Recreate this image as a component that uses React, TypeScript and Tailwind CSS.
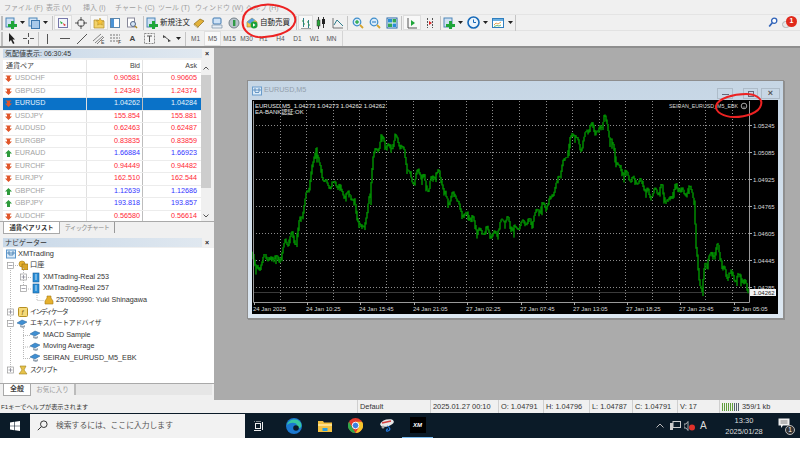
import React from "react";

const FF = "font-['Liberation_Sans','Noto_Sans_CJK_JP',sans-serif]";

/* ---------- chart data ---------- */
const anchors: [number, number][] = [
  [253,252],[256,270],[260,262],[265,258],[270,262],[275,252],[279,261],[283,250],[287,243],[292,232],[296,240],[300,222],[304,208],[307,190],[311,172],[316,148],[319,168],[323,176],[327,182],[332,186],[338,186],[344,192],[350,196],[354,206],[358,218],[362,226],[367,216],[370,196],[373,155],[377,146],[381,136],[385,146],[390,150],[395,134],[402,150],[408,170],[412,178],[418,174],[424,180],[428,186],[433,175],[441,177],[444,192],[450,200],[455,196],[460,208],[466,214],[472,222],[478,228],[486,232],[492,236],[498,226],[504,222],[512,224],[520,228],[530,218],[540,210],[548,200],[556,190],[562,165],[568,148],[574,134],[580,146],[586,132],[592,128],[598,130],[604,118],[609,136],[614,148],[620,170],[626,176],[632,176],[638,182],[644,188],[650,192],[656,194],[662,190],[668,200],[674,192],[680,188],[686,190],[692,192],[694,200],[696,250],[699,275],[702,288],[705,265],[708,262],[712,255],[716,246],[718,244],[721,258],[723,270],[726,278],[729,274],[733,272],[737,276],[741,278],[745,286],[749,292],
];
function yAt(x: number) {
  for (let i = 1; i < anchors.length; i++) {
    const [x0, y0] = anchors[i - 1];
    const [x1, y1] = anchors[i];
    if (x <= x1) return y0 + ((y1 - y0) * (x - x0)) / (x1 - x0);
  }
  return 292;
}
function buildBars() {
  let s = 12345;
  const r = () => {
    s = (s * 1103515245 + 12345) & 0x7fffffff;
    return s / 0x7fffffff;
  };
  let d = "";
  let prev = yAt(253);
  for (let x = 253; x < 749; x += 1) {
    const wave = Math.sin(x * 0.9) * 3.5 + Math.sin(x * 0.37) * 3;
    const m = yAt(x) + wave + (r() - 0.5) * 3;
    const top = Math.min(m, prev) - r();
    const bot = Math.max(m, prev) + r() * r() * r() * 12;
    d += `M${x} ${top.toFixed(1)}V${bot.toFixed(1)}`;
    prev = m;
  }
  return d;
}
const barsPath = buildBars();

const priceLabels = [
  ["1.05245", 125], ["1.05085", 152], ["1.04925", 179], ["1.04765", 206], ["1.04605", 233], ["1.04445", 260], ["1.04285", 287],
] as const;
const timeLabels = [
  ["24 Jan 2025", 253], ["24 Jan 10:25", 306], ["24 Jan 15:45", 359], ["24 Jan 21:05", 413], ["27 Jan 02:25", 466],
  ["27 Jan 07:45", 520], ["27 Jan 13:05", 573], ["27 Jan 18:25", 626], ["27 Jan 23:45", 679], ["28 Jan 05:05", 733],
] as const;

function Chart() {
  const vs: number[] = [];
  for (let i = 0; i < 18; i++) vs.push(279.5 + i * 26.6);
  const st = { fontFamily: "'Liberation Sans', 'Noto Sans CJK JP', sans-serif" };
  return (
    <svg width="526" height="214" viewBox="252 100 526 214" className="block shrink-0" style={st}>
      <rect x="252" y="100" width="526" height="214" fill="#000" />
      {vs.map((x) => (
        <line key={x} x1={Math.round(x) + 0.5} x2={Math.round(x) + 0.5} y1="101" y2="302" stroke="#8c8c8c" strokeWidth="1" strokeDasharray="1 2" />
      ))}
      {priceLabels.map(([, y]) => (
        <line key={y} x1="253" x2="749" y1={y + 0.5} y2={y + 0.5} stroke="#8c8c8c" strokeWidth="1" strokeDasharray="1 2" />
      ))}
      <line x1="253" x2="749" y1="292.5" y2="292.5" stroke="#3a3a3a" />
      <path d={barsPath} stroke="#006800" strokeWidth="1.3" fill="none" />
      <path d={barsPath} stroke="#00a200" strokeWidth="0.8" fill="none" />
      <path d="M253.5 101V302.5H749.5V101" stroke="#9a9a9a" fill="none" />
      <text x="255" y="108" fontSize="6" fill="#e6e6e6">{"EURUSD,M5\u00a0\u00a01.04273 1.04273 1.04262 1.04262"}</text>
      <text x="255" y="114" fontSize="6" fill="#e6e6e6">EA-BANK認証:OK</text>
      <text x="669" y="108" fontSize="6.2" fill="#d8d8d8" textLength="69" lengthAdjust="spacingAndGlyphs">SEIRAN_EURUSD_M5_EBK</text>
      <circle cx="744" cy="106" r="2.8" fill="none" stroke="#cfcfcf" strokeWidth="0.8" />
      <path d="M742.8 106.8q1.2 1 2.4 0" stroke="#cfcfcf" strokeWidth="0.6" fill="none" />
      {priceLabels.map(([t, y]) => (
        <g key={t}>
          <line x1="749" x2="752" y1={y + 0.5} y2={y + 0.5} stroke="#aaa" />
          <text x="753" y={y + 2.5} fontSize="6" fill="#d8d8d8">{t}</text>
        </g>
      ))}
      <rect x="750" y="289" width="26" height="7" fill="#f4f4f4" />
      <text x="753" y="295" fontSize="6" fill="#222">1.04262</text>
      {timeLabels.map(([t, x]) => (
        <g key={t}>
          <line x1={x + 1.5} x2={x + 1.5} y1="302" y2="305" stroke="#aaa" />
          <text x={x} y="310.5" fontSize="6" fill="#d8d8d8">{t}</text>
        </g>
      ))}
    </svg>
  );
}

/* ---------- small icons ---------- */
type P = { children: React.ReactNode; w?: number; h?: number };
const Ic = ({ children, w = 12, h = 12 }: P) => (
  <svg width={w} height={h} viewBox={`0 0 ${w} ${h}`} className="block shrink-0">{children}</svg>
);
const Caret = () => (
  <svg width="5" height="3" viewBox="0 0 5 3" className="block shrink-0"><path d="M0 0h5L2.5 3z" fill="#222" /></svg>
);
const DocPlus = () => (
  <Ic><rect x="1" y="1" width="8" height="9" fill="#cfe0f2" stroke="#4d86b8" /><path d="M6 4h3v3h3v3H9v2H6v-2H3V7h3z" fill="#1fa63a" /></Ic>
);
const DocsBlue = () => (
  <Ic><rect x="1" y="1" width="8" height="8" fill="#d5e6f7" stroke="#4d86b8" /><rect x="3.5" y="3.5" width="8" height="8" fill="#a9c9ea" stroke="#3f78b0" /></Ic>
);
const MWatch = () => (
  <Ic><rect x="1.5" y="1.5" width="9" height="9" fill="#f4f8fc" stroke="#77a" /><path d="M3 4l3 2-2 1z" fill="#2a3" /><path d="M6 6l3 2-2 1z" fill="#d33" /></Ic>
);
const Crosshair = () => (
  <Ic><circle cx="6" cy="6" r="3.5" fill="none" stroke="#555" /><path d="M6 0v4M6 8v4M0 6h4M8 6h4" stroke="#555" /></Ic>
);
const FolderStar = () => (
  <Ic><path d="M1 3h4l1 1h5v7H1z" fill="#f3d36a" stroke="#b08a2a" strokeWidth=".7" /><path d="M7 1l1.2 2.4 2.6.3-1.9 1.8.5 2.6L7 6.9 4.6 8.1l.5-2.6L3.2 3.7l2.6-.3z" fill="#f7c43a" stroke="#a98424" strokeWidth=".5" /></Ic>
);
const Panel = () => (
  <Ic><rect x="1.5" y="1.5" width="9" height="9" fill="#fff" stroke="#5b86ad" /><rect x="2" y="2" width="3" height="8" fill="#4b93d6" /></Ic>
);
const DocMag = () => (
  <Ic><rect x="1.5" y="1" width="7" height="9" fill="#fff" stroke="#889" /><circle cx="7" cy="7" r="2.5" fill="#d5e6f7" stroke="#568" /><path d="M9 9l2 2" stroke="#a82" strokeWidth="1.4" /></Ic>
);
const Book = () => (
  <Ic><path d="M1 7l6-5 4 2-6 6z" fill="#e3b23a" stroke="#8d6a16" strokeWidth=".7" /><path d="M1 7l4 3v1L1 8z" fill="#fff3c8" stroke="#8d6a16" strokeWidth=".4" /></Ic>
);
const Monitor = () => (
  <Ic><rect x="2" y="1" width="8" height="6" rx="1" fill="#cfe3f7" stroke="#3f78b0" /><path d="M1 8h10v3H1z" fill="#e7eef6" stroke="#7a8fa5" strokeWidth=".7" /></Ic>
);
const Globe = () => (
  <Ic><circle cx="6" cy="6" r="5" fill="#b9c4cc" stroke="#77838c" /><rect x="5" y="3" width="2.4" height="6" fill="#2e9a45" /></Ic>
);
const AutoTrade = () => (
  <Ic><path d="M1 5l5-4 5 4v5H1z" fill="#f1c84e" stroke="#a2801f" strokeWidth=".6" /><path d="M1 5l5-4 3 2-5 4z" fill="#5aa0e0" /><circle cx="8" cy="8" r="3.4" fill="#19a13b" /><path d="M7 6.3l2.5 1.7L7 9.7z" fill="#fff" /></Ic>
);
const Bars = () => (
  <Ic><path d="M3.5 1v9M8.5 3v8" stroke="#2f7d8c" /><path d="M2 4h1.5M3.5 7H5M7 5h1.5M8.5 8H10" stroke="#2a9d3a" /><path d="M1 11.5h10" stroke="#666" strokeWidth=".6" /></Ic>
);
const Candles = () => (
  <Ic><path d="M3.5 0v12M8.5 0v11" stroke="#333" /><rect x="2" y="3" width="3" height="6" fill="#2aa53c" stroke="#333" strokeWidth=".5" /><rect x="7" y="2" width="3" height="5" fill="#222" /></Ic>
);
const LineC = () => (
  <Ic><path d="M1 1v10h10" stroke="#555" fill="none" strokeWidth=".8" /><path d="M2 8l3-5 3 3 3 3" stroke="#2f7d8c" fill="none" /></Ic>
);
const Zoom = ({ minus }: { minus?: boolean }) => (
  <Ic><circle cx="5" cy="5" r="3.8" fill="#dcecf9" stroke="#3e8dcb" strokeWidth="1.2" /><path d="M3 5h4" stroke={minus ? "#3e8dcb" : "#1fa63a"} strokeWidth="1.2" />{!minus && <path d="M5 3v4" stroke="#1fa63a" strokeWidth="1.2" />}<path d="M8 8l3 3" stroke="#d8a52f" strokeWidth="1.8" /></Ic>
);
const Tile = () => (
  <Ic><rect x="1" y="1" width="10" height="10" fill="#fff" stroke="#2467a8" /><rect x="2" y="2" width="4" height="3.5" fill="#2a8ed6" /><rect x="6.5" y="2" width="3.5" height="3.5" fill="#35a853" /><rect x="2" y="6.5" width="4" height="3.5" fill="#35a853" /><rect x="6.5" y="6.5" width="3.5" height="3.5" fill="#2a8ed6" /></Ic>
);
const AutoScroll = () => (
  <Ic><path d="M2 1v10h9" stroke="#555" fill="none" /><path d="M5 3l4 3-4 3z" fill="#1fa63a" /></Ic>
);
const Shift = () => (
  <Ic><path d="M3.5 1v10M8.5 1v10" stroke="#555" strokeDasharray="2 1" /><path d="M5 4l3 2-3 2z" fill="#d22" /></Ic>
);
const Clock = () => (
  <Ic w={13} h={13}><circle cx="6.5" cy="6.5" r="5.5" fill="#eaf3fb" stroke="#1669b8" strokeWidth="1.6" /><path d="M6.5 3.5v3h2.5" stroke="#1669b8" fill="none" /></Ic>
);
const Tpl = () => (
  <Ic w={13} h={12}><rect x=".5" y="1.5" width="11" height="9" fill="#fff" stroke="#2f7fbf" /><rect x="1" y="2" width="10" height="2" fill="#6aaee0" /><path d="M2 8l2-2 2 1 3-2" stroke="#e08a2a" fill="none" strokeWidth=".8" /><path d="M2 9.5l3-1 2 .5 2-1" stroke="#2a9d3a" fill="none" strokeWidth=".7" /></Ic>
);
const Sep = () => <div className="w-px h-[14px] bg-[#c4c4c4] mx-[1px] shrink-0" />;
const Slot = ({ w = 17, active, children }: { w?: number; active?: boolean; children?: React.ReactNode }) => (
  <div className={`h-[15px] flex items-center justify-center gap-[3px] shrink-0 ${active ? "bg-[#f8f8f8] border border-[#dedede]" : ""}`} style={{ width: w }}>{children}</div>
);
const Grip = () => <div className="w-[2px] h-[14px] border-l border-r border-[#bdbdbd] mx-[1px] shrink-0" />;

function Menu() {
  const items: [string, number][] = [["ファイル (F)", 42], ["表示 (V)", 37], ["挿入 (I)", 32], ["チャート (C)", 43], ["ツール (T)", 37], ["ウィンドウ (W)", 51], ["ヘルプ (H)", 40]];
  return (
    <div className="h-[13px] mt-[2px] pl-[4px] flex items-center text-[7px] text-[#a0a0a0] border-b border-[#e4e4e4] whitespace-nowrap">
      {items.map(([t, w]) => <span key={t} className="shrink-0" style={{ width: w }}>{t}</span>)}
    </div>
  );
}

function Toolbar1() {
  return (
    <div className="h-[16px] flex items-center border-b border-[#e2e2e2]">
      <Grip />
      <Slot w={21}><DocPlus /><Caret /></Slot>
      <Slot w={26}><DocsBlue /><Caret /></Slot>
      <Sep />
      <Slot w={18} active><MWatch /></Slot>
      <Slot w={18}><Crosshair /></Slot>
      <Slot w={18} active><FolderStar /></Slot>
      <Slot w={14}><Panel /></Slot>
      <Slot w={20}><DocMag /></Slot>
      <Sep />
      <div className="w-[45px] pl-[1px] flex items-center gap-[2px] shrink-0 text-[7.5px] text-[#222] whitespace-nowrap"><DocPlus /><span>新規注文</span></div>
      <Slot w={18}><Book /></Slot>
      <Slot w={18}><Monitor /></Slot>
      <Slot w={16}><Globe /></Slot>
      <div className="w-[53px] pl-[4px] flex items-center gap-[2px] shrink-0 text-[7.5px] text-[#222] whitespace-nowrap"><AutoTrade /><span>自動売買</span></div>
      <Sep />
      <Slot w={15} active><Bars /></Slot>
      <Slot w={16}><Candles /></Slot>
      <Slot w={17}><LineC /></Slot>
      <Sep />
      <Slot w={17}><Zoom /></Slot>
      <Slot w={17}><Zoom minus /></Slot>
      <Slot w={17}><Tile /></Slot>
      <Sep />
      <Slot w={18} active><AutoScroll /></Slot>
      <Slot w={18}><Shift /></Slot>
      <Sep />
      <Slot w={22}><DocPlus /><Caret /></Slot>
      <Slot w={26}><Clock /><Caret /></Slot>
      <Slot w={25}><Tpl /><Caret /></Slot>
      <div className="w-px h-[16px] bg-[#c4c4c4] shrink-0" />
      <div className="ml-auto flex items-center gap-[4px] pr-[2px]">
        <svg width="10" height="11" viewBox="0 0 10 11"><circle cx="6.2" cy="3.8" r="2.6" fill="#fff" stroke="#2f62b8" strokeWidth="1.3" /><path d="M4.3 5.8L1.2 9.5" stroke="#2f62b8" strokeWidth="1.7" /></svg>
        <div className="relative w-[16px] h-[16px]">
          <div className="absolute left-[0px] top-[6px] w-[8px] h-[7px] rounded-full bg-[#e8e8e8] border border-[#b5b5b5]" />
          <div className="absolute left-[4px] top-[1px] w-[11px] h-[11px] rounded-full bg-[#e02a1c] text-white text-[7px] font-bold flex items-center justify-center">1</div>
        </div>
      </div>
    </div>
  );
}

function Toolbar2() {
  const tfs = ["M1", "M5", "M15", "M30", "H1", "H4", "D1", "W1", "MN"];
  return (
    <div className="h-[17px] flex items-center border-b-2 border-[#8e8e8e]">
      <Grip />
      <Slot w={15}><svg width="8" height="11" viewBox="0 0 8 11"><path d="M1 0v9l2-2 2 4 1.5-.7-2-3.8H7z" fill="#222" /></svg></Slot>
      <Slot w={18}><svg width="11" height="11" viewBox="0 0 11 11"><path d="M5.5 0v4M5.5 7v4M0 5.5h4M7 5.5h4" stroke="#555" /></svg></Slot>
      <Sep />
      <Slot w={15}><svg width="3" height="10"><path d="M1.5 0v10" stroke="#555" /></svg></Slot>
      <Slot w={19}><svg width="10" height="3"><path d="M0 1.5h10" stroke="#555" /></svg></Slot>
      <Slot w={16}><svg width="10" height="10"><path d="M0 10L10 0" stroke="#555" /></svg></Slot>
      <Slot w={17}><svg width="12" height="11"><path d="M0 8l8-7M2 10l8-7M4 11l7-7" stroke="#666" strokeWidth=".8" /><text x="8" y="11" fontSize="5" fill="#444">E</text></svg></Slot>
      <Slot w={17}><svg width="12" height="11"><path d="M0 2h10M0 5h10M0 8h10" stroke="#777" strokeDasharray="2 1" /><text x="8" y="11" fontSize="5" fill="#444">F</text></svg></Slot>
      <Slot w={17}><span className="text-[8px] font-bold text-[#444]">A</span></Slot>
      <Slot w={17}><svg width="11" height="11"><rect x=".5" y=".5" width="10" height="10" fill="#f4f4f4" stroke="#8a8a8a" strokeDasharray="2 1" /><path d="M3 3h5M5.5 3v6" stroke="#555" /></svg></Slot>
      <Slot w={26}><svg width="11" height="9"><path d="M1 1l3 2-3 1zM6 5l3 2-3 1z" fill="#444" /><path d="M3 3l4 3" stroke="#555" /></svg><Caret /></Slot>
      <Sep />
      {tfs.map((t) => (
        <div key={t} className={`w-[17px] h-[15px] shrink-0 flex items-center justify-center text-[6.5px] text-[#555] ${t === "M5" ? "bg-[#f9f9f9] border border-[#e0e0e0]" : ""}`}>{t}</div>
      ))}
      <div className="w-px h-[15px] bg-[#d4d4d4] ml-[2px] shrink-0" />
    </div>
  );
}

/* ---------- market watch ---------- */
type Q = [string, string, string, boolean];
const quotes: Q[] = [
  ["USDCHF", "0.90581", "0.90605", false], ["GBPUSD", "1.24349", "1.24374", false], ["EURUSD", "1.04262", "1.04284", false],
  ["USDJPY", "155.854", "155.881", false], ["AUDUSD", "0.62463", "0.62487", false], ["EURGBP", "0.83835", "0.83859", false],
  ["EURAUD", "1.66884", "1.66923", true], ["EURCHF", "0.94449", "0.94482", false], ["EURJPY", "162.510", "162.544", false],
  ["GBPCHF", "1.12639", "1.12686", true], ["GBPJPY", "193.818", "193.857", true], ["AUDCHF", "0.56580", "0.56614", false],
];
const Arrow = ({ up }: { up: boolean }) => (
  <svg width="7" height="7" viewBox="0 0 7 7" className="shrink-0">
    {up ? <path d="M3.5 0L7 3.5H5V7H2V3.5H0z" fill="#2d9a3a" /> : <path d="M3.5 7L0 3.5H2V1.5H0.8V0.5H6.2V1.5H5V3.5H7z" fill="#e0562a" />}
  </svg>
);
const QRow = ({ q, sel }: { q: Q; sel: boolean }) => {
  const color = sel ? "text-[#e8f2fb]" : q[3] ? "text-[#3333ff]" : "text-[#ff1f35]";
  return (
    <div className={`h-[12.5px] flex items-center text-[7.2px] border-b border-[#ececec] ${sel ? "bg-[#0a72c8]" : "bg-white"}`}>
      <div className="w-[84px] h-full flex items-center pl-[2px] gap-[3px] border-r border-[#e0e0e0] shrink-0">
        <Arrow up={q[3]} />
        <span className={sel ? "text-[#e8f2fb]" : "text-[#a3a3a3]"}>{q[0]}</span>
      </div>
      <div className={`w-[56px] h-full flex items-center justify-end pr-[2px] border-r border-[#bdbdbd] shrink-0 ${color}`}>{q[1]}</div>
      <div className={`flex-1 h-full flex items-center justify-end pr-[4px] ${color}`}>{q[2]}</div>
    </div>
  );
};
const PanelTitle = ({ t }: { t: string }) => (
  <div className="h-[9px] flex items-center pl-[3px] pr-[2px] shrink-0">
    <div className="flex-1 h-full bg-gradient-to-r from-[#c8d8e8] to-[#e0e8f0] text-[7px] leading-[9px] text-[#333] pl-[2px] overflow-hidden whitespace-nowrap">{t}</div>
    <div className="w-[10px] text-center text-[7px] font-bold text-[#222] leading-[9px]">×</div>
  </div>
);

function MarketWatch() {
  return (
    <div className="flex flex-col h-[186px] pt-[1px]">
      <PanelTitle t="気配値表示: 06:30:45" />
      <div className="flex flex-1 pl-[3px] pt-[2px] min-h-0">
        <div className="w-[198px] shrink-0 overflow-hidden">
          <div className="h-[13px] flex items-center text-[7px] text-[#444] bg-white border-b border-[#dcdcdc]">
            <div className="w-[84px] pl-[3px] shrink-0 border-r border-[#e4e4e4] h-full flex items-center">通貨ペア</div>
            <div className="w-[56px] pr-[2px] shrink-0 border-r border-[#e4e4e4] h-full flex items-center justify-end">Bid</div>
            <div className="flex-1 text-right pr-[4px]">Ask</div>
          </div>
          {quotes.map((q) => <QRow key={q[0]} q={q} sel={q[0] === "EURUSD"} />)}
        </div>
        <div className="w-[10px] flex flex-col bg-[#f0f0f0]">
          <div className="h-[15px] shrink-0 flex items-center justify-center"><svg width="6" height="4"><path d="M.5 3.5L3 1l2.5 2.5" stroke="#555" fill="none" /></svg></div>
          <div className="h-[113px] shrink-0 bg-[#cdcdcd]" />
          <div className="flex-1" />
          <div className="h-[10px] shrink-0 flex items-center justify-center"><svg width="6" height="4"><path d="M.5.5L3 3l2.5-2.5" stroke="#555" fill="none" /></svg></div>
        </div>
      </div>
      <div className="h-[13px] flex items-start pl-[3px] pr-[2px] shrink-0 bg-[#f0f0f0] border-t border-[#a9a9a9] whitespace-nowrap">
        <div className="h-[12px] w-[57px] bg-white border-x border-b border-[#a9a9a9] flex items-center justify-center font-bold text-[6.3px] text-[#333]">通貨ペアリスト</div>
        <div className="h-[11px] w-[55px] border-r border-[#999] flex items-center justify-center text-[6.3px] tracking-[-0.7px] text-[#8a8a8a]">ティックチャート</div>
      </div>
    </div>
  );
}

/* ---------- navigator ---------- */
const Gold = () => <Ic w={10} h={10}><path d="M3 1h4v2l2 3v3H1V6l2-3z" fill="#e6b12e" stroke="#a67b14" strokeWidth=".6" /></Ic>;
const Broker = () => <Ic w={10} h={11}><rect x="2" y="1" width="6" height="9" fill="#2a8ed6" stroke="#1a5f99" strokeWidth=".6" /><path d="M4 3h2M4 5h2M4 7h2" stroke="#fff" strokeWidth=".7" /></Ic>;
const Cap = () => <Ic w={11} h={10}><path d="M0 4l5-3 5 2-5 3z" fill="#3f8fd2" stroke="#245f96" strokeWidth=".5" /><path d="M3 6l3 1 2-1v2l-2 1-3-1z" fill="#9aa6b2" /></Ic>;
const Rows: { p: number; icon: React.ReactNode; t: string; fs: number; ls?: number }[] = [
  { p: 3, fs: 7.4, icon: <Ic w={10} h={10}><rect x=".5" y="1" width="9" height="8" fill="#dcebf8" stroke="#5c97cc" /><path d="M2 3h2v2H2zM6 3h2v2H6zM3 6h4" stroke="#3877ad" fill="none" strokeWidth=".8" /></Ic>, t: "XMTrading" },
  { p: 15, fs: 7.2, icon: <Ic w={10} h={10}><circle cx="4" cy="4" r="3" fill="#e6b12e" stroke="#a67b14" strokeWidth=".6" /><rect x="4" y="4" width="6" height="6" fill="#d8a52a" stroke="#946c10" strokeWidth=".6" /></Ic>, t: "口座" },
  { p: 28, fs: 7.2, icon: <Broker />, t: "XMTrading-Real 253" },
  { p: 28, fs: 7.2, icon: <Broker />, t: "XMTrading-Real 257" },
  { p: 41, fs: 7.2, icon: <Gold />, t: "257065990: Yuki Shinagawa" },
  { p: 15, fs: 6.8, ls: -1.4, icon: <Ic w={10} h={10}><rect x=".5" y=".5" width="9" height="9" rx="1" fill="#f5d978" stroke="#b58f22" /><text x="3.5" y="8" fontSize="7" fontStyle="italic" fill="#8a6a10">f</text></Ic>, t: "インディケータ" },
  { p: 14, fs: 6.8, ls: -0.3, icon: <Cap />, t: "エキスパートアドバイザ" },
  { p: 27, fs: 7.2, icon: <Cap />, t: "MACD Sample" },
  { p: 27, fs: 7.2, icon: <Cap />, t: "Moving Average" },
  { p: 27, fs: 7.2, icon: <Cap />, t: "SEIRAN_EURUSD_M5_EBK" },
  { p: 15, fs: 6.8, ls: -1.4, icon: <Ic w={10} h={10}><path d="M2 1h6L6 5l3 4H1l3-4z" fill="#e6c24a" stroke="#a0801a" strokeWidth=".6" /></Ic>, t: "スクリプト" },
];
function Navigator() {
  return (
    <div className="flex flex-col h-[166px] pb-[4px]">
      <div className="pt-[4px] shrink-0"><PanelTitle t="ナビゲーター" /></div>
      <div className="relative flex-1 ml-[3px] mt-[1px] bg-white text-[#333] min-h-0 overflow-hidden">
        {Rows.map((r) => (
          <div key={r.t} className="h-[11.64px] flex items-center gap-[2px] whitespace-nowrap" style={{ paddingLeft: r.p, fontSize: r.fs }}>
            {r.icon}<span style={{ letterSpacing: r.ls }}>{r.t}</span>
          </div>
        ))}
        {/* tree connectors lie over the rows */}
        <svg width="60" height="130" viewBox="0 0 60 130" className="absolute left-0 top-0 pointer-events-none">
          <g stroke="#b8b8b8" strokeDasharray="1 1" fill="none">
            <path d="M7.5 20V122M10 17.5H15" />
            <path d="M20.5 20V41M23 29.5H28M23 41H28" />
            <path d="M34 45V52.5H41" />
            <path d="M20.5 80V110.5M20 87.5H27M20 99H27M20 110.5H27" />
          </g>
          <g fill="#fff" stroke="#999" strokeWidth=".7">
            <rect x="4.5" y="14.5" width="6" height="6" />
            <rect x="17.5" y="26" width="6" height="6" />
            <rect x="17.5" y="37.5" width="6" height="6" />
            <rect x="4.5" y="61" width="6" height="6" />
            <rect x="4.5" y="72.5" width="6" height="6" />
            <rect x="4.5" y="119" width="6" height="6" />
          </g>
          <path d="M5.5 17.5h4M18.5 29h4M20.5 27v4M18.5 40.5h4M5.5 64h4M7.5 62v4M5.5 75.5h4M5.5 122h4M7.5 120v4" stroke="#667" strokeWidth=".6" />
        </svg>
      </div>
      <div className="h-[13px] flex items-start pl-[3px] shrink-0 border-t border-[#a9a9a9] whitespace-nowrap">
        <div className="h-[12px] w-[28px] bg-white border-x border-b border-[#a9a9a9] flex items-center justify-center font-bold text-[7px] text-[#444]">全般</div>
        <div className="h-[11px] w-[45px] border-r-2 border-[#bbb] flex items-center justify-center text-[6.5px] text-[#9a9a9a]">お気に入り</div>
        <div className="flex-1 h-[11px] bg-[#e6e6e6] mr-[2px]" />
      </div>
    </div>
  );
}

/* ---------- chart window ---------- */
function ChartWindow() {
  return (
    <div className="w-[537px] h-[239px] border border-[#8e8e8e] bg-gradient-to-b from-[#c6d6e5] to-[#dde8f2] flex flex-col px-[4px] pb-[4px] shadow-[1px_1px_0_#8f8f8f]">
      <div className="h-[19px] flex items-center shrink-0">
        <svg width="10" height="10" viewBox="0 0 10 10" className="ml-[0px] shrink-0"><rect x=".5" y="1" width="9" height="8" fill="#dcebf8" stroke="#6a9ccb" /><path d="M2 3h2v2H2zM6 3h2v2H6zM3 6.5h4" stroke="#4a82b6" fill="none" strokeWidth=".8" /></svg>
        <span className="ml-[2px] text-[7.2px] text-[#94a0ac]">EURUSD,M5</span>
        <div className="ml-auto flex items-start gap-[3px] mt-[6px] -mr-[1px]">
          <div className="w-[16px] h-[11px] border border-[#aebcc9] flex items-center justify-center"><div className="w-[7px] h-[1.5px] bg-[#667] mt-[2px]" /></div>
          <div className="w-[4px]" />
          <div className="w-[15px] h-[11px] border border-[#aebcc9] flex items-center justify-center"><div className="w-[6px] h-[6px] border border-[#667]" /></div>
          <div className="w-[19px] h-[11px] border border-[#aebcc9] flex items-center justify-center text-[9px] leading-none font-bold text-[#555]">×</div>
        </div>
      </div>
      <Chart />
    </div>
  );
}

/* ---------- status + task bars ---------- */
function StatusBar() {
  const cells: [string, number][] = [["Default", 73], ["2025.01.27 00:10", 68], ["O: 1.04791", 45], ["H: 1.04796", 46], ["L: 1.04787", 43], ["C: 1.04791", 45], ["V: 17", 42]];
  return (
    <div className="h-[13px] flex items-center bg-[#f0f0f0] text-[7.4px] text-[#333] shrink-0 whitespace-nowrap">
      <div className="w-[357px] pl-[1px] shrink-0 text-[6.2px]">F1キーでヘルプが表示されます</div>
      {cells.map(([t, w]) => (
        <div key={t} className="h-full flex items-center pl-[2px] border-l border-[#cfcfcf] shrink-0" style={{ width: w }}>{t}</div>
      ))}
      <div className="h-full flex items-center gap-[3px] pl-[2px] border-l border-[#cfcfcf]">
        <svg width="17" height="8" viewBox="0 0 17 8">
          <path d="M.5 0v8M2.5 0v8M4.5 0v8M6.5 0v8M8.5 0v8M10.5 0v8" stroke="#5f9e3a" />
          <path d="M12.5 0v8M14.5 0v8M16.5 0v8" stroke="#55636d" />
        </svg>
        <span>359/1 kb</span>
      </div>
    </div>
  );
}

function Taskbar() {
  return (
    <div className="h-[25px] flex items-center bg-[#0b1b28] shrink-0 text-white">
      <div className="w-[30px] flex justify-center shrink-0">
        <svg width="10" height="10" viewBox="0 0 10 10"><path d="M0 1.4L4.3.8v3.9H0zM4.9.7L10 0v4.7H4.9zM0 5.3h4.3v3.9L0 8.6zM4.9 5.3H10V10l-5.100-.7z" fill="#fff" /></svg>
      </div>
      <div className="w-[215px] h-[24px] bg-[#f2f2f2] flex items-center pl-[7px] gap-[8px] shrink-0">
        <svg width="11" height="11" viewBox="0 0 11 11"><circle cx="6.8" cy="4.2" r="3.3" fill="none" stroke="#333" /><path d="M4.3 6.7L.8 10.2" stroke="#333" /></svg>
        <span className="text-[7.8px] text-[#555]">検索するには、ここに入力します</span>
      </div>
      <div className="w-[28px] flex justify-center shrink-0">
        <svg width="10" height="10" viewBox="0 0 10 10"><path d="M0 0h1M2 0h5M0 9.5h7M8.5 1v8" stroke="#eee" /><rect x="1.5" y="2.5" width="5" height="5" fill="none" stroke="#eee" /></svg>
      </div>
      <div className="w-[31px] ml-[5px] flex justify-center shrink-0">
        <svg width="16" height="16" viewBox="0 0 16 16"><circle cx="8" cy="8" r="8" fill="#1b78d0" /><path d="M1 7C2 2 9 0 13 3c3 2 3 6 1 7H8c0-2 2-2 3-3-1-3-7-3-10 0z" fill="#37c7a0" /><circle cx="10" cy="10" r="2.8" fill="#0b1b28" /></svg>
      </div>
      <div className="w-[31px] flex justify-center shrink-0">
        <svg width="14" height="12" viewBox="0 0 14 12"><path d="M0 1h5l1 1.5h8V12H0z" fill="#f3c242" /><rect x="0" y="4" width="14" height="2" fill="#ffe08a" /><rect x="4.5" y="8" width="5" height="3" fill="#2aa0e0" /></svg>
      </div>
      <div className="w-[31px] flex justify-center shrink-0">
        <svg width="15" height="15" viewBox="0 0 16 16"><circle cx="8" cy="8" r="8" fill="#e33b2e" /><path d="M8 16A8 8 0 0 1 1 4l3.5 6z" fill="#2ea84a" /><path d="M8 16a8 8 0 0 0 7-12L8 4l3.5 6z" fill="#f7c52c" /><circle cx="8" cy="8" r="3.5" fill="#3a7fe0" stroke="#fff" strokeWidth="1" /></svg>
      </div>
      <div className="w-[31px] flex justify-center shrink-0">
        <svg width="16" height="16" viewBox="0 0 16 16"><ellipse cx="8" cy="5" rx="7" ry="3.5" fill="#e8e8e8" transform="rotate(-15 8 5)" /><path d="M3 5l9-2" stroke="#d64040" strokeWidth="1.5" /><path d="M8 8c3 1 4 4 1 5-2 1-2-2 0-2" stroke="#2476d8" fill="none" strokeWidth="1.3" /><circle cx="4" cy="9" r="1.5" fill="#aaa" /></svg>
      </div>
      <div className="w-[31px] h-full flex flex-col items-center justify-center shrink-0 border-b-[1.5px] border-[#76b9ed]">
        <div className="w-[16px] h-[16px] bg-black flex items-center justify-center text-[6px] font-bold italic text-white leading-none">XM</div>
      </div>
      <div className="ml-auto flex items-center h-full">
        <svg width="8" height="5" viewBox="0 0 8 5" className="mr-[6px]"><path d="M.5 4.5L4 1l3.5 3.5" stroke="#bbb" fill="none" /></svg>
        <svg width="11" height="10" viewBox="0 0 11 10" className="mr-[3px]"><rect x="3" y=".5" width="7.5" height="6" fill="none" stroke="#ccc" /><rect x="0" y="2" width="3" height="7" fill="#ccc" /></svg>
        <svg width="11" height="10" viewBox="0 0 11 10" className="mr-[5px]"><path d="M0 3h2l2-2.5v9L2 7H0z" fill="none" stroke="#ccc" strokeWidth=".8" /><circle cx="8" cy="6.5" r="3" fill="#e0312a" /></svg>
        <span className="text-[10px] text-[#ddd] w-[20px]">A</span>
        <div className="w-[48px] text-center text-[7.5px] leading-[11px] text-[#ddd]"><div>13:30</div><div>2025/01/28</div></div>
        <div className="relative w-[22px] ml-[6px] mr-[4px] h-[16px]">
          <svg width="12" height="11" viewBox="0 0 12 11" className="absolute left-[4px] top-0"><path d="M.5.5h11v7H5L3 10V7.5H.5z" fill="#eee" /><path d="M2.5 3h7M2.5 5h7" stroke="#555" strokeWidth=".7" /></svg>
          <div className="absolute left-[11px] top-[7px] w-[10px] h-[10px] rounded-full bg-[#333] border border-[#bbb] text-[6.5px] leading-[8px] text-center text-white">1</div>
        </div>
      </div>
    </div>
  );
}

export default function App() {
  return (
    <div className={`relative w-[800px] h-[450px] bg-white overflow-hidden flex flex-col ${FF}`}>
      <div className="bg-[#f0f0f0] shrink-0 flex flex-col">
        <Menu />
        <Toolbar1 />
        <Toolbar2 />
      </div>
      <div className="flex flex-1 min-h-0 bg-[#f0f0f0]">
        <div className="w-[214px] shrink-0 flex flex-col bg-[#f0f0f0]">
          <MarketWatch />
          <Navigator />
        </div>
        <div className="flex-1 bg-[#ababab] pl-[33px] pt-[32px] min-w-0">
          <ChartWindow />
        </div>
      </div>
      <StatusBar />
      <Taskbar />
      <div className="h-[12px] bg-white shrink-0" />
      {/* hand-drawn red annotations over the screenshot */}
      <svg width="800" height="450" viewBox="0 0 800 450" className="absolute left-0 top-0 pointer-events-none">
        <path d="M243 20C243 8 262 3 274 5 288 7 297 14 295 22 292 33 272 38 258 37 248 36 241 28 243 20" fill="none" stroke="#ec2222" strokeWidth="2" />
        <path d="M716 106c2-8 18-12 30-12 10 0 17 5 15 11-2 8-15 12-27 12-10 0-19-5-18-11z" fill="none" stroke="#ec2222" strokeWidth="2" />
      </svg>
    </div>
  );
}
